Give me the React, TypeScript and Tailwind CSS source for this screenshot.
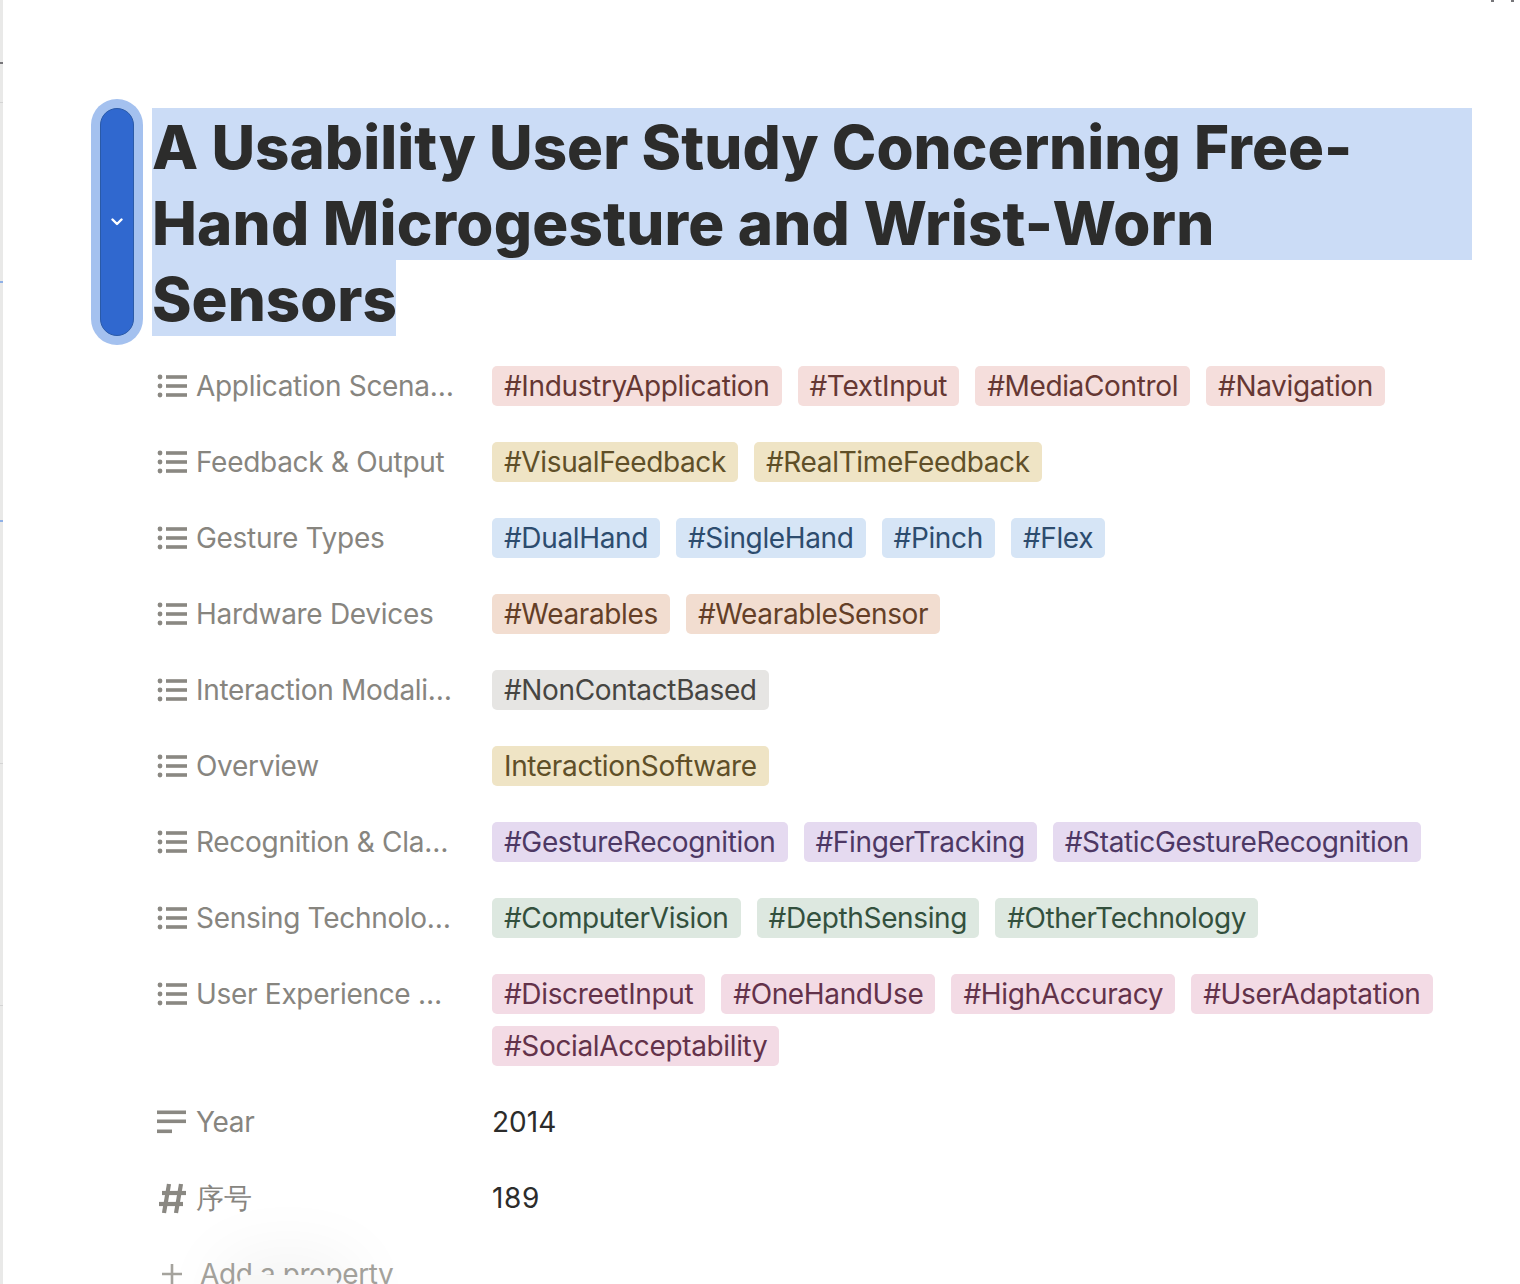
const rows = [
  { label: "Application Scena…", color: "bg-[#f5dedc] text-[#653733]", tags: ["#IndustryApplication", "#TextInput", "#MediaControl", "#Navigation"] },
  { label: "Feedback & Output", color: "bg-[#efe4c5] text-[#5f4f28]", tags: ["#VisualFeedback", "#RealTimeFeedback"] },
  { label: "Gesture Types", color: "bg-[#d6e5f6] text-[#2d4c6e]", tags: ["#DualHand", "#SingleHand", "#Pinch", "#Flex"] },
  { label: "Hardware Devices", color: "bg-[#f2ddd0] text-[#643f27]", tags: ["#Wearables", "#WearableSensor"] },
  { label: "Interaction Modali…", color: "bg-[#e6e5e3] text-[#464542]", tags: ["#NonContactBased"] },
  { label: "Overview", color: "bg-[#efe4c5] text-[#5f4f28]", tags: ["InteractionSoftware"] },
  { label: "Recognition & Cla…", color: "bg-[#e5daf0] text-[#4d3864]", tags: ["#GestureRecognition", "#FingerTracking", "#StaticGestureRecognition"] },
  { label: "Sensing Technolo…", color: "bg-[#dde8e0] text-[#33503d]", tags: ["#ComputerVision", "#DepthSensing", "#OtherTechnology"] },
  { label: "User Experience …", color: "bg-[#f3dbe5] text-[#63324a]", tags: ["#DiscreetInput", "#OneHandUse", "#HighAccuracy", "#UserAdaptation", "#SocialAcceptability"] },
];

function ListIcon() {
  return (
    <svg width="30" height="24" viewBox="0 0 30 24" className="shrink-0 text-[#8a8882]" fill="currentColor">
      <circle cx="3" cy="3" r="2.4" />
      <circle cx="3" cy="12" r="2.4" />
      <circle cx="3" cy="21" r="2.4" />
      <rect x="9" y="1.2" width="21" height="3.6" />
      <rect x="9" y="10.2" width="21" height="3.6" />
      <rect x="9" y="19.2" width="21" height="3.6" />
    </svg>
  );
}

function TextIcon() {
  return (
    <svg width="30" height="24" viewBox="0 0 30 24" className="shrink-0 text-[#8a8882]" fill="currentColor">
      <rect x="0" y="0.5" width="29" height="3.6" />
      <rect x="0" y="9.5" width="29" height="3.6" />
      <rect x="0" y="19.5" width="15" height="3.6" />
    </svg>
  );
}

function HashIcon() {
  return (
    <svg width="30" height="32" viewBox="0 0 30 32" className="shrink-0 text-[#8a8882]" fill="none" stroke="currentColor" strokeWidth="4.2">
      <path d="M12 2 L7 31" />
      <path d="M24 2 L19 31" />
      <path d="M5 11 H29" />
      <path d="M2 22 H26" />
    </svg>
  );
}

function PropRow({ icon, label, children }: { icon: React.ReactNode; label: string; children: React.ReactNode }) {
  return (
    <div className="flex items-start">
      <div className="flex h-10 w-[335px] shrink-0 items-center gap-[9px] tracking-[-0.3px] text-[#87857f]">
        {icon}
        <span>{label}</span>
      </div>
      {children}
    </div>
  );
}

export default function App() {
  return (
    <div className="relative h-[1284px] w-[1520px] overflow-hidden bg-white text-[28px] font-['Inter',sans-serif]">
      {/* window edge behind the page */}
      <div className="absolute left-0 top-0 h-full w-[3px] bg-[#e9e9e8]" />
      <div className="absolute left-0 top-[62px] h-[2px] w-[3px] bg-[#77767a]" />
      <div className="absolute left-0 top-[102px] h-px w-[3px] bg-[#d4d4d4]" />
      <div className="absolute left-0 top-[281px] h-[2px] w-[3px] bg-[#8fb0e6]" />
      <div className="absolute left-0 top-[520px] h-[2px] w-[3px] bg-[#8fb0e6]" />
      <div className="absolute left-0 top-[763px] h-px w-[3px] bg-[#d4d4d4]" />
      <div className="absolute left-0 top-[1005px] h-px w-[3px] bg-[#d4d4d4]" />
      <div className="absolute left-[1491px] top-0 h-[2px] w-[3px] bg-[#77767a]" />
      <div className="absolute left-[1511px] top-0 h-[2px] w-[3px] bg-[#77767a]" />

      <div className="pl-[91px] pt-[99px]">
        <div className="flex">
          <div className="h-[246px] w-[52px] rounded-[26px] bg-[#a4c1ef] p-[9px]">
            <div className="flex h-full items-center justify-center rounded-[17px] border border-[#2a5aa8] bg-[#3068cf]">
              <svg width="12" height="8" viewBox="0 0 12 8" fill="none" stroke="white" strokeWidth="2.4" strokeLinecap="round" strokeLinejoin="round">
                <path d="M1.5 1.5 L6 6 L10.5 1.5" />
              </svg>
            </div>
          </div>
          <h1 className="ml-[9px] mt-[9px] w-[1320px] text-[60px] font-extrabold leading-[72px] text-[#2c2c2b]">
            <div className="h-[76px] bg-[#cbdcf6] pt-[3px] tracking-[0.05px]">A Usability User Study Concerning Free-</div>
            <div className="h-[76px] bg-[#cbdcf6] pt-[3px] tracking-[0.2px]">Hand Microgesture and Wrist-Worn</div>
            <div className="h-[76px] w-[244px] bg-[#cbdcf6] pt-[3px]">Sensors</div>
          </h1>
        </div>

        <div className="ml-[66px] mt-[21px] flex flex-col gap-9">
          {rows.map((row) => (
            <PropRow key={row.label} icon={<ListIcon />} label={row.label}>
              <div className="flex flex-wrap gap-x-4 gap-y-3">
                {row.tags.map((tag) => (
                  <span key={tag} className={`flex h-10 items-center rounded-[5px] px-3 tracking-[-0.36px] ${row.color}`}>
                    {tag}
                  </span>
                ))}
              </div>
            </PropRow>
          ))}
          <PropRow icon={<TextIcon />} label="Year">
            <span className="flex h-10 items-center text-[#2c2c2b]">2014</span>
          </PropRow>
          <PropRow icon={<HashIcon />} label="序号">
            <span className="flex h-10 items-center tracking-[0.6px] text-[#2c2c2b]">189</span>
          </PropRow>
          <div className="flex h-10 items-center gap-4 pl-[3px] tracking-[-0.4px] text-[#a5a39d]">
            <svg width="24" height="24" viewBox="0 0 24 24" stroke="currentColor" strokeWidth="2.6">
              <path d="M12 2 V22 M2 12 H22" />
            </svg>
            <span>Add a property</span>
          </div>
        </div>
      </div>

      {/* floating pill at the bottom edge, with its soft shadow */}
      <div className="absolute left-[238px] top-[1275px] h-[40px] w-[100px] rounded-[12px] bg-[#f7f7f6] shadow-[0_0_70px_20px_rgba(0,0,0,0.05)]" />
    </div>
  );
}
